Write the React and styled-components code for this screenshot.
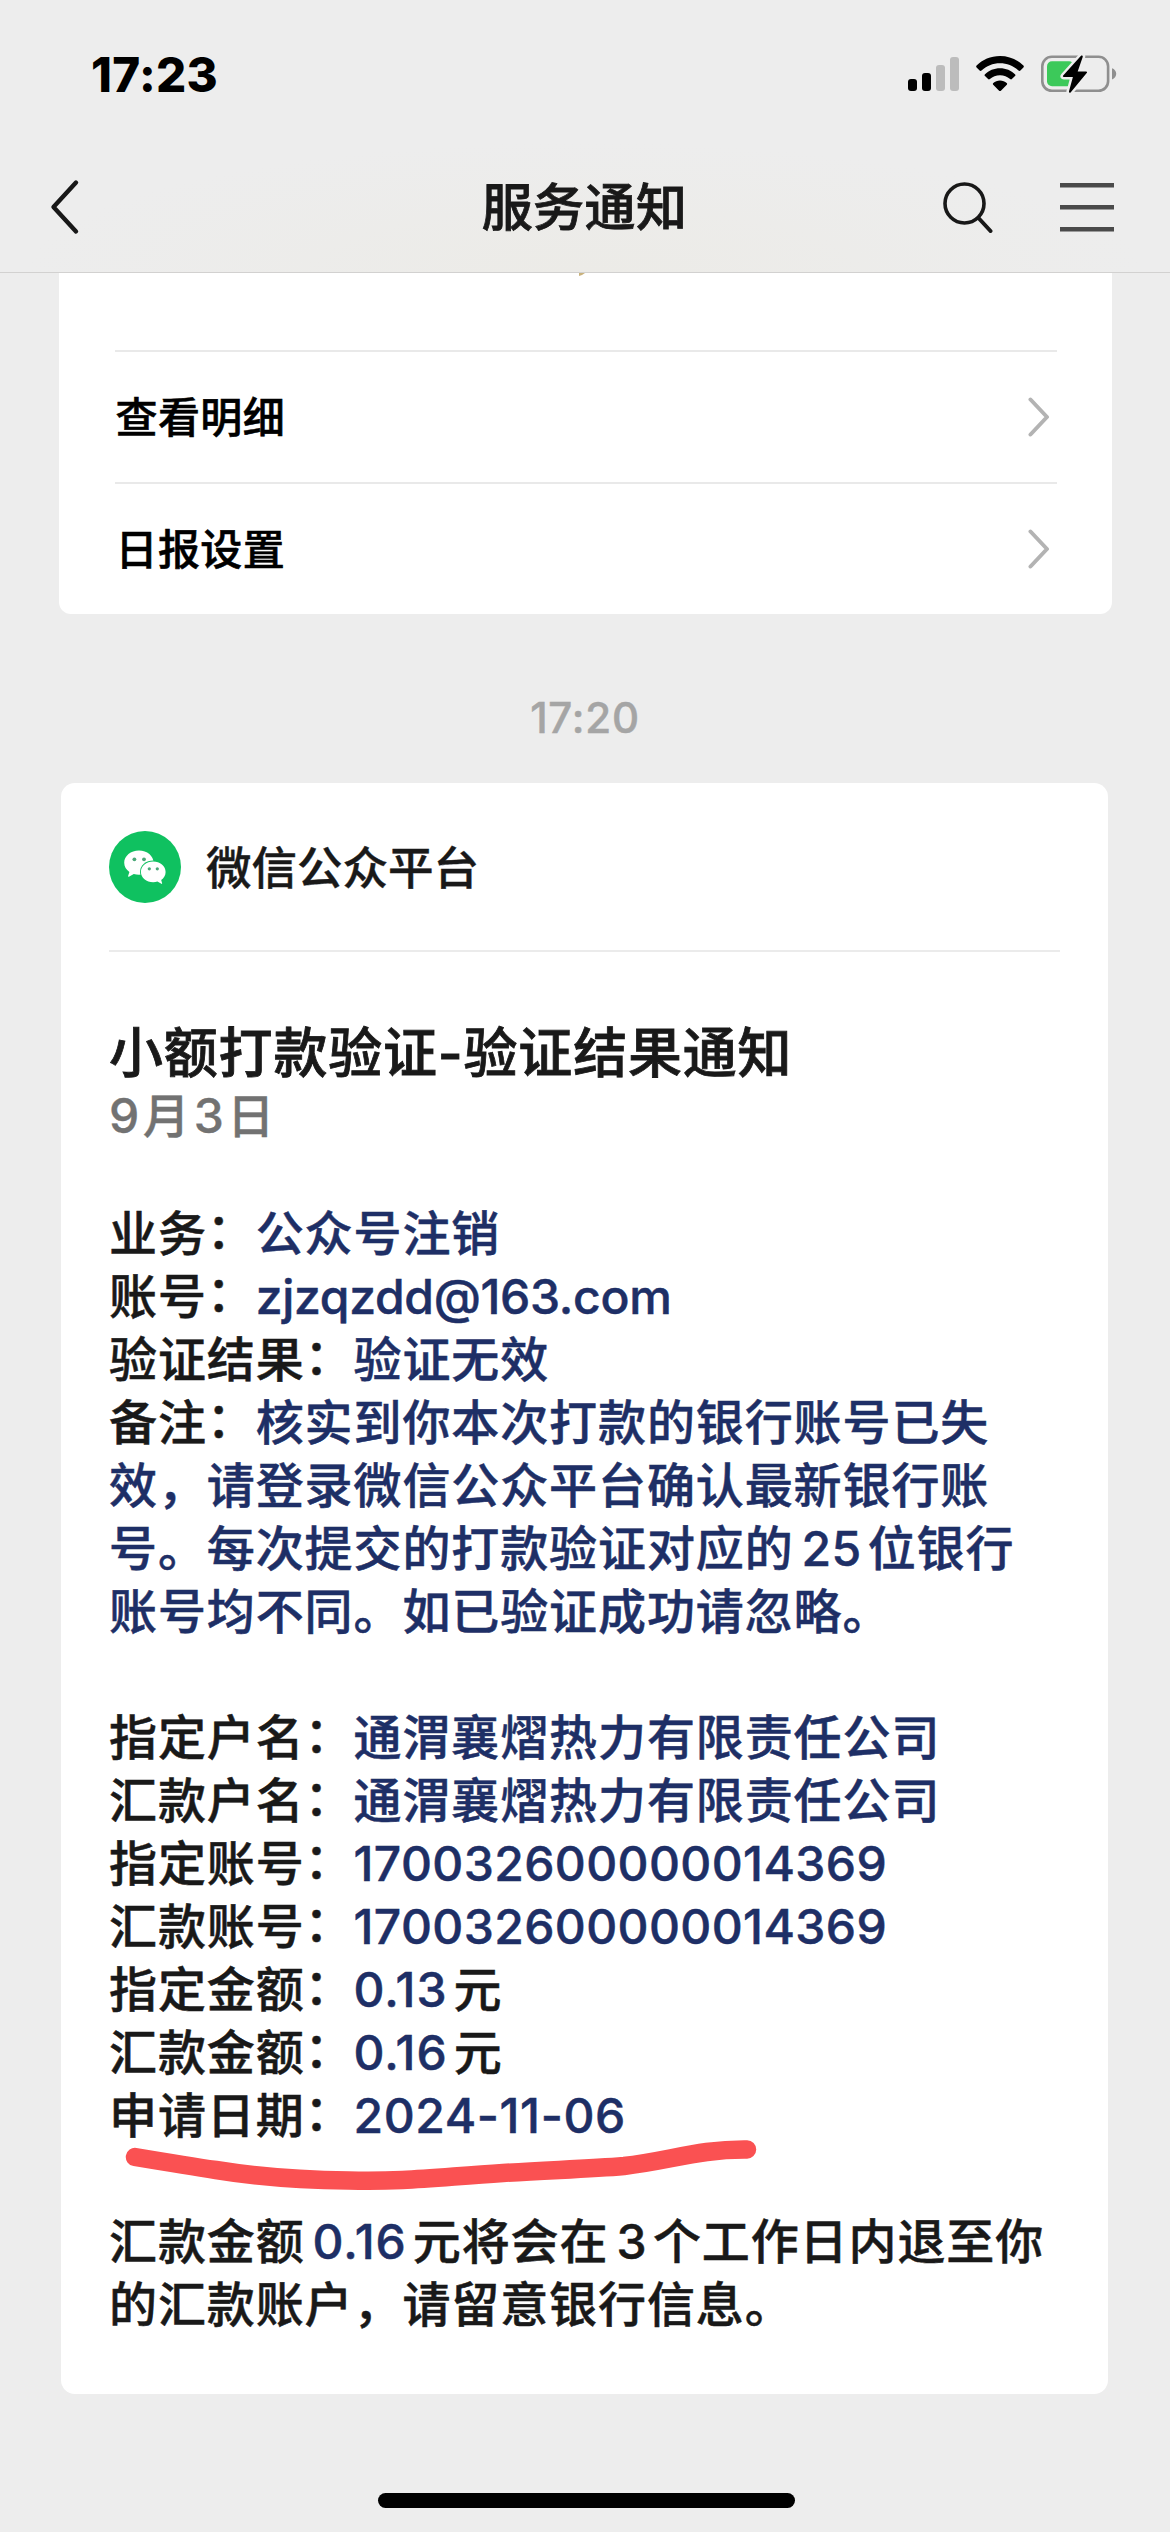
import React from "react";
import styled, { createGlobalStyle } from "styled-components";

const Global = createGlobalStyle`
  * { box-sizing: border-box; }
  html, body { margin: 0; padding: 0; background: #ededed; }
  body {
    font-family: Inter, "Noto Sans CJK SC", sans-serif;
    font-weight: 500;
    color: #191919;
  }
  svg { display: block; flex: none; }
`;

const Screen = styled.div`
  width: 1170px;
  height: 2532px;
  overflow: hidden;
  display: flex;
  flex-direction: column;
  align-items: center;
  background: #ededed;
`;

const Header = styled.header`
  width: 100%;
  height: 273px;
  flex: none;
  border-bottom: 1px solid #d2d1d0;
  background: radial-gradient(ellipse 560px 130px at 50% 100%, #ecebe7, #ededed);
`;

const StatusBar = styled.div`
  height: 142px;
  padding: 6px 53px 0 91px;
  display: flex;
  align-items: center;
  justify-content: space-between;
`;

const Clock = styled.span`
  font-size: 47.5px;
  font-weight: 800;
  letter-spacing: 0.3px;
  color: #000;
`;

const StatusIcons = styled.div`
  display: flex;
  align-items: center;
  gap: 17px;
`;

const NavBar = styled.div`
  height: 130px;
  padding: 0 56px 0 50px;
  display: grid;
  grid-template-columns: 200px 1fr 200px;
  align-items: center;
`;

const NavTitle = styled.h1`
  margin: 1px 0 0 5px;
  text-align: center;
  font-size: 51px;
  font-weight: 500;
  line-height: 60px;
  letter-spacing: 0.4px;
  -webkit-text-stroke: 0.8px #191919;
`;

const NavActions = styled.div`
  display: flex;
  justify-content: flex-end;
  align-items: center;
  gap: 67px;
`;

const MenuCard = styled.section`
  width: 1053px;
  height: 341px;
  flex: none;
  padding: 0 55px 0 56px;
  background: #fff;
  border-radius: 0 0 12px 12px;
  display: flex;
  flex-direction: column;
`;

const Remainder = styled.div`
  height: 77px;
  flex: none;
  padding-left: 463px;
`;

const MenuRow = styled.div`
  height: 132px;
  flex: none;
  border-top: 2px solid #e9e9e9;
  padding: 0 7px 0 1px;
  display: flex;
  align-items: center;
  justify-content: space-between;
  font-size: 42px;
  letter-spacing: 0.4px;
  color: #000;
  -webkit-text-stroke: 0.6px #000;
`;

const RowLabel = styled.span`
  padding-bottom: 5px;
`;

const Timestamp = styled.time`
  margin: 78px 0 40px;
  line-height: 51px;
  font-size: 42px;
  letter-spacing: 0.8px;
  color: #a5a5a5;
  -webkit-text-stroke: 0.5px #a5a5a5;
`;

const NoticeCard = styled.article`
  width: 1047px;
  height: 1611px;
  flex: none;
  margin-right: 1px;
  padding: 0 48px;
  background: #fff;
  border-radius: 14px;
`;

const Sender = styled.div`
  height: 169px;
  border-bottom: 2px solid #ebebeb;
  display: flex;
  align-items: center;
  gap: 25px;
  font-size: 45.5px;
  -webkit-text-stroke: 0.4px #191919;
`;

const SenderName = styled.span`
  padding-bottom: 4px;
`;

const NoticeTitle = styled.h2`
  margin: 69px 0 0;
  font-size: 54px;
  font-weight: 500;
  line-height: 66px;
  letter-spacing: 0.8px;
  white-space: nowrap;
  -webkit-text-stroke: 0.8px #191919;
`;

const NoticeDate = styled.div`
  margin-top: -3px;
  line-height: 63px;
  font-size: 47px;
  color: #727272;
  white-space: nowrap;
  -webkit-text-stroke: 0.4px #727272;
`;

const Body = styled.div`
  position: relative;
  margin-top: 55px;
  font-size: 48px;
  letter-spacing: 0.9px;
  -webkit-text-stroke: 0.5px;
`;

const Line = styled.div`
  height: 63px;
  line-height: 63px;
  white-space: pre;
`;

const Colon = styled.span`
  line-height: 1;
  vertical-align: 3px;
`;

const Value = styled.span`
  color: #1e2f66;
`;

const Latin = styled.span`
  font-size: 48px;
  letter-spacing: ${(p) => (p.$track === undefined ? 0.4 : p.$track)}px;
  margin: 0 ${(p) => p.$after || 0}px 0 ${(p) => p.$before || 0}px;
`;

const Marker = styled.svg`
  position: absolute;
  left: 0;
  top: 902px;
`;

const HomeBar = styled.div`
  width: 417px;
  height: 15px;
  flex: none;
  margin: 99px 0 0 2px;
  border-radius: 8px;
  background: #000;
`;

const Signal = () => (
  <svg width="51" height="34" viewBox="0 0 51 34">
    <rect x="0" y="22" width="9" height="12" rx="3" />
    <rect x="14" y="16" width="9" height="18" rx="3" />
    <rect x="28" y="8" width="9" height="26" rx="3" fill="#bcbcbc" />
    <rect x="42" y="0" width="9" height="34" rx="3" fill="#bcbcbc" />
  </svg>
);

const Wifi = () => (
  <svg width="48" height="36" viewBox="0 0 48 36">
    <path d="M24 0C14.6 0 6.500 3.700.6 9.600c-.6.600-.6 1.300 0 1.900l3 3c.5.500 1.300.5 1.900 0C10.400 9.900 16.900 7.200 24 7.200s13.600 2.700 18.500 7.300c.6.500 1.400.5 1.900 0l3-3c.6-.6.6-1.300 0-1.900C41.500 3.700 33.400 0 24 0z" />
    <path d="M24 12.200c-5.900 0-11.200 2.300-15 6-.6.500-.6 1.300 0 1.800l3.100 3.100c.5.500 1.200.5 1.800 0 2.700-2.400 6.200-3.900 10.100-3.900s7.400 1.500 10.100 3.900c.6.500 1.300.5 1.800 0L39 20c.6-.5.6-1.300 0-1.800-3.800-3.700-9.100-6-15-6z" />
    <path d="M24 24.600c-2.600 0-4.900.9-6.700 2.400-.6.500-.6 1.200-.1 1.700l5.900 6c.5.500 1.300.5 1.800 0l5.900-6c.5-.5.5-1.200-.1-1.700-1.800-1.500-4.100-2.400-6.700-2.400z" />
  </svg>
);

const Battery = () => (
  <svg width="76" height="38" viewBox="0 0 76 38">
    <rect x="1.300" y="1.800" width="65.800" height="34" rx="9.500" fill="none" stroke="#8f8f8f" strokeWidth="2.600" />
    <rect x="6" y="6.300" width="27" height="25" rx="5" fill="#3cc95a" />
    <path d="M71 13.200c2.600.8 4.200 3 4.200 5.600s-1.600 4.800-4.200 5.600z" fill="#8f8f8f" />
    <path d="M40 .8 22.200 20.600c-.7.800-.3 1.500.7 1.500h9L28 36.300c-.4 1.300.9 1.900 1.800.9L45.700 18c.7-.8.3-1.600-.7-1.600h-8.300L41.700 2c.4-1.200-.8-2-1.700-1.200z" fill="#000" stroke="#eee" strokeWidth="5" strokeLinejoin="round" paintOrder="stroke" />
  </svg>
);

const Back = () => (
  <svg width="30" height="56" viewBox="0 0 30 56">
    <path d="M26 3.500 3.500 28 26 52.500" fill="none" stroke="#181818" strokeWidth="4.400" strokeLinecap="round" strokeLinejoin="round" />
  </svg>
);

const Search = () => (
  <svg width="50" height="52" viewBox="0 0 50 52">
    <circle cx="21.500" cy="22.500" r="19.500" fill="none" stroke="#181818" strokeWidth="3.600" />
    <path d="M35.500 37 47.500 50" stroke="#181818" strokeWidth="4" strokeLinecap="round" />
  </svg>
);

const Menu = () => (
  <svg width="54" height="49" viewBox="0 0 54 49">
    <path d="M0 2.300H54M0 24.300H54M0 46.300H54" stroke="#4a4a4a" strokeWidth="4.600" />
  </svg>
);

const Chevron = () => (
  <svg width="22" height="40" viewBox="0 0 22 40">
    <path d="M2.500 2.500 19 20 2.500 37.500" fill="none" stroke="#b3b3b3" strokeWidth="4" strokeLinecap="round" strokeLinejoin="round" />
  </svg>
);

const WeChatAvatar = () => (
  <svg width="72" height="72" viewBox="0 0 72 72">
    <circle cx="36" cy="36" r="36" fill="#0fc160" />
    <path d="M30 19.600c-8.200 0-14.800 5.500-14.800 12.200 0 3.700 2 7 5.200 9.200L19.100 45c-.2.600.3 1 .8.700l4.900-2.700c1.600.5 3.400.8 5.200.8 8.200 0 14.600-5.300 14.600-12S38.200 19.600 30 19.600z" fill="#fff" />
    <ellipse cx="44.200" cy="40.800" rx="13.200" ry="11.300" fill="#0fc160" />
    <path d="M44.200 30.600c-6.800 0-12.300 4.600-12.300 10.300s5.500 10.300 12.300 10.300c1.500 0 2.900-.2 4.200-.6l4 2.200c.5.300.9-.1.700-.6l-.9-3.200c2.700-1.900 4.400-4.800 4.400-8.100 0-5.700-5.600-10.300-12.400-10.300z" fill="#fff" />
    <circle cx="25.400" cy="28.300" r="1.900" fill="#4aa878" />
    <circle cx="35" cy="28.300" r="1.900" fill="#4aa878" />
    <circle cx="40.300" cy="37.800" r="1.600" fill="#4aa878" />
    <circle cx="48.300" cy="37.800" r="1.600" fill="#4aa878" />
  </svg>
);

const ACCOUNT = "1700326" + "000000" + "14369";

const Field = ({ label, children }) => (
  <Line>{label}<Colon>：</Colon>{children}</Line>
);

export default function App() {
  return (
    <Screen>
      <Global />
      <Header>
        <StatusBar>
          <Clock>17:23</Clock>
          <StatusIcons>
            <Signal />
            <Wifi />
            <Battery />
          </StatusIcons>
        </StatusBar>
        <NavBar>
          <Back />
          <NavTitle>服务通知</NavTitle>
          <NavActions>
            <Search />
            <Menu />
          </NavActions>
        </NavBar>
      </Header>

      <MenuCard>
        <Remainder>
          <svg width="8" height="4" viewBox="0 0 8 4">
            <path d="M1 0H7L4 2 1 3z" fill="#c9b27c" />
          </svg>
        </Remainder>
        {["查看明细", "日报设置"].map((label) => (
          <MenuRow key={label}>
            <RowLabel>{label}</RowLabel>
            <Chevron />
          </MenuRow>
        ))}
      </MenuCard>

      <Timestamp>17:20</Timestamp>

      <NoticeCard>
        <Sender>
          <WeChatAvatar />
          <SenderName>微信公众平台</SenderName>
        </Sender>
        <NoticeTitle>小额打款验证-验证结果通知</NoticeTitle>
        <NoticeDate>
          <Latin $after={3}>9</Latin>月<Latin $before={4} $after={3}>3</Latin>日
        </NoticeDate>
        <Body>
          <Field label="业务"><Value>公众号注销</Value></Field>
          <Field label="账号"><Value><Latin $track={-0.3}>zjzqzdd@163.com</Latin></Value></Field>
          <Field label="验证结果"><Value>验证无效</Value></Field>
          <Field label="备注"><Value>核实到你本次打款的银行账号已失</Value></Field>
          <Line><Value>效，请登录微信公众平台确认最新银行账</Value></Line>
          <Line><Value>号。每次提交的打款验证对应的<Latin $before={8} $after={6}>25</Latin>位银行</Value></Line>
          <Line><Value>账号均不同。如已验证成功请忽略。</Value></Line>
          <Line />
          <Field label="指定户名"><Value>通渭襄熠热力有限责任公司</Value></Field>
          <Field label="汇款户名"><Value>通渭襄熠热力有限责任公司</Value></Field>
          <Field label="指定账号"><Value><Latin>{ACCOUNT}</Latin></Value></Field>
          <Field label="汇款账号"><Value><Latin>{ACCOUNT}</Latin></Value></Field>
          <Field label="指定金额"><Value><Latin $after={6} $track={1}>0.13</Latin></Value>元</Field>
          <Field label="汇款金额"><Value><Latin $after={6} $track={1}>0.16</Latin></Value>元</Field>
          <Field label="申请日期"><Value><Latin $track={0.6}>2024-11-06</Latin></Value></Field>
          <Line />
          <Line>汇款金额<Value><Latin $before={8} $after={6} $track={1}>0.16</Latin></Value>元将会在<Latin $before={8} $after={6}>3</Latin>个工作日内退至你</Line>
          <Line>的汇款账户，请留意银行信息。</Line>
          <Marker width="660" height="100" viewBox="110 2103 660 100">
            <path d="M136 2156C160 2160 190 2165 217 2169C260 2176 300 2179 350 2179.500C405 2181 440 2176 504 2172C550 2169 590 2168 625 2165C670 2160 700 2148 748 2148.500" fill="none" stroke="#fa5152" strokeWidth="18.500" strokeLinecap="round" strokeLinejoin="round" />
          </Marker>
        </Body>
      </NoticeCard>

      <HomeBar />
    </Screen>
  );
}
